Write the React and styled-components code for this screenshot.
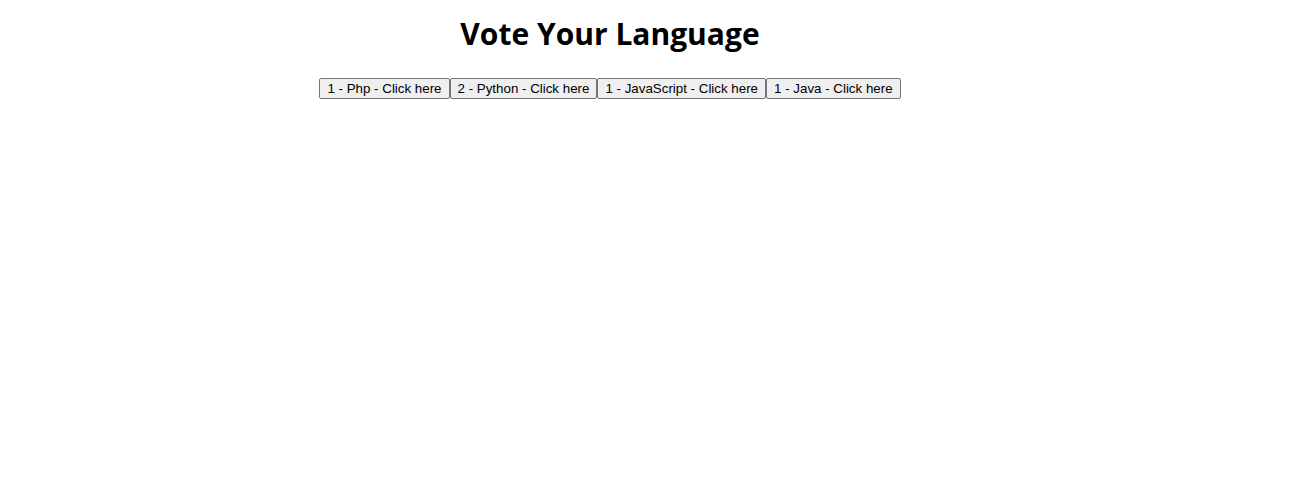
import React, { useState } from "react";
import styled, { createGlobalStyle } from "styled-components";

const Global = createGlobalStyle`
  body {
    margin: 0;
    background: #ffffff;
  }
`;

const Page = styled.div`
  width: 1220px;
  text-align: center;
  padding-top: 12px;
`;

const Title = styled.h1`
  margin: 0 0 22px;
  font-family: "Open Sans", "Noto Sans", sans-serif;
  font-weight: 700;
  font-size: 30px;
  line-height: 44px;
  color: #000;
`;

const Row = styled.div`
  display: flex;
  justify-content: center;
`;

const VoteButton = styled.button`
  font-family: "Liberation Sans", Arial, sans-serif;
  font-size: 13.333px;
  line-height: 15px;
  color: #000;
  background: #efefef;
  border: 1px solid #767676;
  border-radius: 2px;
  padding: 2px 7px;
  margin: 0;
  cursor: pointer;
`;

const initial = [
  { name: "Php", votes: 1 },
  { name: "Python", votes: 2 },
  { name: "JavaScript", votes: 1 },
  { name: "Java", votes: 1 },
];

export default function App() {
  const [langs, setLangs] = useState(initial);
  const vote = (i) =>
    setLangs((l) => l.map((x, j) => (j === i ? { ...x, votes: x.votes + 1 } : x)));
  return (
    <Page>
      <Global />
      <Title>Vote Your Language</Title>
      <Row>
        {langs.map((l, i) => (
          <VoteButton key={l.name} onClick={() => vote(i)}>
            {l.votes} - {l.name} - Click here
          </VoteButton>
        ))}
      </Row>
    </Page>
  );
}
